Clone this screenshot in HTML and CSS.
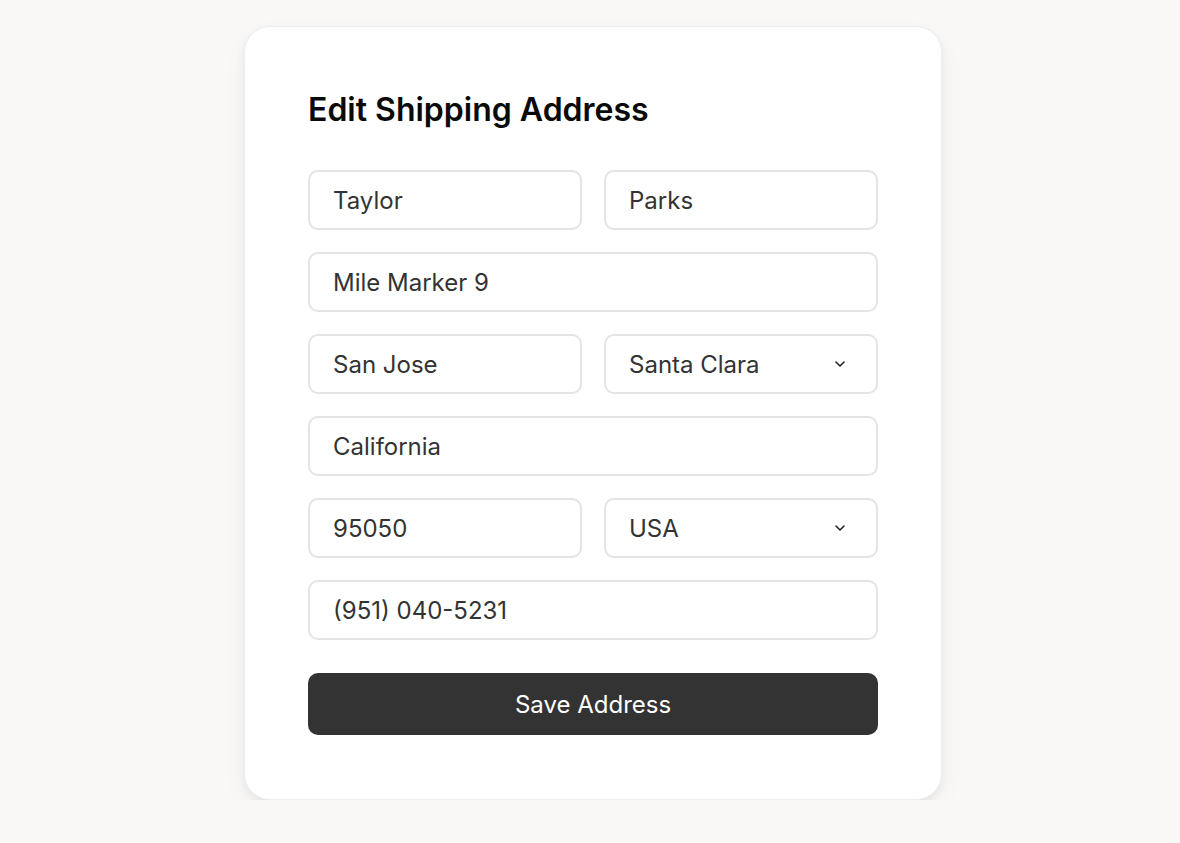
FILE: index.html
```html
<!DOCTYPE html>
<html lang="en">
<head>
<meta charset="utf-8">
<title>Edit Shipping Address</title>
<link rel="stylesheet" href="styles.css">
</head>
<body>
<main class="page">
  <form class="card">
    <h1 class="title">Edit Shipping Address</h1>
    <div class="fields">
      <div class="row two">
        <div class="field">Taylor</div>
        <div class="field">Parks</div>
      </div>
      <div class="row">
        <div class="field">Mile Marker 9</div>
      </div>
      <div class="row two">
        <div class="field">San Jose</div>
        <div class="field select"><span>Santa Clara</span>
          <svg class="chev" viewBox="0 0 12 8" width="12" height="8"><path d="M2 2l4 4 4-4" fill="none" stroke="#222" stroke-width="1.6" stroke-linecap="round" stroke-linejoin="round"/></svg>
        </div>
      </div>
      <div class="row">
        <div class="field">California</div>
      </div>
      <div class="row two">
        <div class="field">95050</div>
        <div class="field select"><span>USA</span>
          <svg class="chev" viewBox="0 0 12 8" width="12" height="8"><path d="M2 2l4 4 4-4" fill="none" stroke="#222" stroke-width="1.6" stroke-linecap="round" stroke-linejoin="round"/></svg>
        </div>
      </div>
      <div class="row">
        <div class="field">(951) 040-5231</div>
      </div>
    </div>
    <button type="button" class="save">Save Address</button>
  </form>
</main>
</body>
</html>
```

FILE: styles.css
```css
* { box-sizing: border-box; }
html, body { margin: 0; padding: 0; }
body {
  background: #f9f8f7;
  font-family: Inter, "Noto Sans", sans-serif;
  color: #333;
}
.page {
  display: flex;
  justify-content: center;
  padding-top: 26px;
  padding-left: 6px;
}
.card {
  width: 698px;
  background: #fff;
  border-radius: 26px;
  border: 1px solid #eeedeb;
  box-shadow: 0 4px 10px rgba(0,0,0,0.06), 0 10px 30px rgba(0,0,0,0.03);
  padding: 63px 63px 64px;
  display: flex;
  flex-direction: column;
}
.title {
  margin: 0 0 41px;
  font-size: 32px;
  line-height: 39px;
  font-weight: 600;
  color: #0a0a0a;
}
.fields {
  display: flex;
  flex-direction: column;
  gap: 22px;
}
.row { display: flex; }
.row.two { display: grid; grid-template-columns: 1fr 1fr; gap: 22px; }
.field {
  height: 60px;
  border: 2px solid #e4e4e4;
  border-radius: 10px;
  padding: 0 23px;
  display: flex;
  align-items: center;
  font-size: 24px;
  color: #333;
  flex: 1;
}
.select { justify-content: space-between; padding-right: 30px; }
.chev { display: block; }
.save {
  margin-top: 33px;
  height: 62px;
  border: none;
  border-radius: 10px;
  background: #333;
  color: #fff;
  font-family: Inter, "Noto Sans", sans-serif;
  font-size: 24px;
  font-weight: 400;
}
```
